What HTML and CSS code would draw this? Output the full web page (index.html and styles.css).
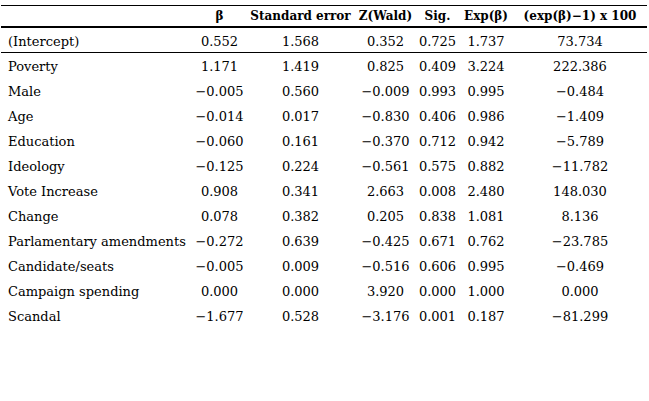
FILE: index.html
```html
<!DOCTYPE html>
<html>
<head>
<meta charset="utf-8">
<link rel="stylesheet" href="styles.css">
</head>
<body>
<table class="reg">
<colgroup>
<col class="c-label"><col class="c-b"><col class="c-se"><col class="c-z"><col class="c-sig"><col class="c-exp"><col class="c-pct">
</colgroup>
<thead>
<tr><th></th><th>β</th><th>Standard error</th><th>Z(Wald)</th><th>Sig.</th><th>Exp(β)</th><th>(exp(β)−1) x 100</th></tr>
</thead>
<tbody>
<tr class="first"><td>(Intercept)</td><td>0.552</td><td>1.568</td><td>0.352</td><td>0.725</td><td>1.737</td><td>73.734</td></tr>
<tr><td>Poverty</td><td>1.171</td><td>1.419</td><td>0.825</td><td>0.409</td><td>3.224</td><td>222.386</td></tr>
<tr><td>Male</td><td>−0.005</td><td>0.560</td><td>−0.009</td><td>0.993</td><td>0.995</td><td>−0.484</td></tr>
<tr><td>Age</td><td>−0.014</td><td>0.017</td><td>−0.830</td><td>0.406</td><td>0.986</td><td>−1.409</td></tr>
<tr><td>Education</td><td>−0.060</td><td>0.161</td><td>−0.370</td><td>0.712</td><td>0.942</td><td>−5.789</td></tr>
<tr><td>Ideology</td><td>−0.125</td><td>0.224</td><td>−0.561</td><td>0.575</td><td>0.882</td><td>−11.782</td></tr>
<tr><td>Vote Increase</td><td>0.908</td><td>0.341</td><td>2.663</td><td>0.008</td><td>2.480</td><td>148.030</td></tr>
<tr><td>Change</td><td>0.078</td><td>0.382</td><td>0.205</td><td>0.838</td><td>1.081</td><td>8.136</td></tr>
<tr><td>Parlamentary amendments</td><td>−0.272</td><td>0.639</td><td>−0.425</td><td>0.671</td><td>0.762</td><td>−23.785</td></tr>
<tr><td>Candidate/seats</td><td>−0.005</td><td>0.009</td><td>−0.516</td><td>0.606</td><td>0.995</td><td>−0.469</td></tr>
<tr><td>Campaign spending</td><td>0.000</td><td>0.000</td><td>3.920</td><td>0.000</td><td>1.000</td><td>0.000</td></tr>
<tr><td>Scandal</td><td>−1.677</td><td>0.528</td><td>−3.176</td><td>0.001</td><td>0.187</td><td>−81.299</td></tr>
</tbody>
</table>
</body>
</html>
```

FILE: styles.css
```css
html, body {
  margin: 0;
  padding: 0;
  background: #fff;
}
body {
  padding: 5px 2px 0 1px;
  font-family: "DejaVu Serif", "Liberation Serif", serif;
  color: #000;
}
.reg {
  border-collapse: collapse;
  table-layout: fixed;
  width: 646px;
  border-top: 1px solid #000;
}
.c-label { width: 192px; }
.c-b { width: 53px; }
.c-se { width: 109px; }
.c-z { width: 61px; }
.c-sig { width: 43px; }
.c-exp { width: 54px; }
.c-pct { width: 134px; }
.reg th {
  font-size: 12px;
  font-weight: bold;
  height: 20px;
  padding: 0;
  text-align: center;
  white-space: nowrap;
  border-bottom: 2px solid #000;
}
.reg td {
  font-size: 13px;
  height: 23px;
  padding: 2px 0 0;
  text-align: center;
  white-space: nowrap;
}
.reg td:first-child {
  text-align: left;
  padding-left: 7px;
}
.reg tr.first td {
  height: 22px;
  border-bottom: 1px solid #000;
}
```
